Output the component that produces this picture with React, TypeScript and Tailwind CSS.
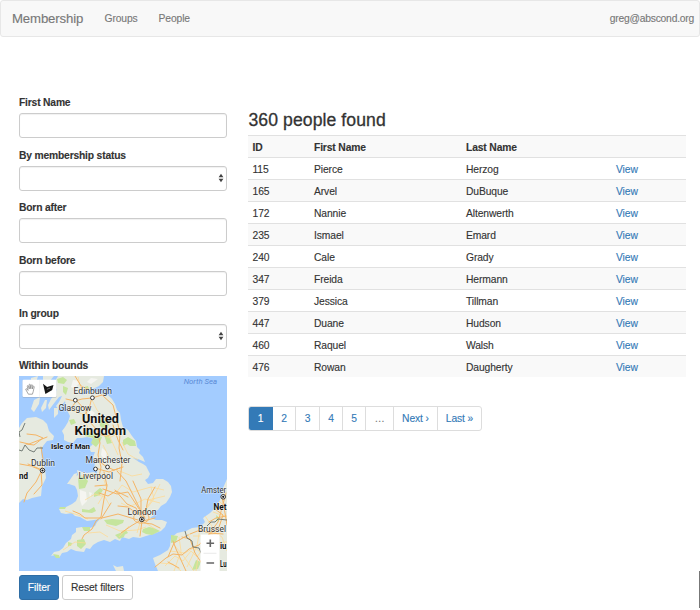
import React from 'react';

const people: [number, string, string][] = [
  [115, 'Pierce', 'Herzog'],
  [165, 'Arvel', 'DuBuque'],
  [172, 'Nannie', 'Altenwerth'],
  [235, 'Ismael', 'Emard'],
  [240, 'Cale', 'Grady'],
  [347, 'Freida', 'Hermann'],
  [379, 'Jessica', 'Tillman'],
  [447, 'Duane', 'Hudson'],
  [460, 'Raquel', 'Walsh'],
  [476, 'Rowan', 'Daugherty'],
];

function Field({ label, select = false }: { label: string; select?: boolean }) {
  return (
    <div className="h-[52.7px]">
      <div className="flex h-[16px] items-start font-bold leading-[12.6px] tracking-[-0.18px]">{label}</div>
      <div className="flex h-[25px] items-center justify-end rounded-[3px] border border-[#ccc] bg-white pr-[2px] shadow-[inset_0_1px_1px_rgba(0,0,0,0.06)]">
        {select && (
          <svg width="6" height="10" viewBox="0 0 6 10" fill="#444">
            <path d="M3 .8 5.4 4.2H.6zM3 9.2.6 5.8h4.8z" />
          </svg>
        )}
      </div>
    </div>
  );
}

function City({ x, y, capital = false }: { x: number; y: number; capital?: boolean }) {
  return (
    <g>
      <circle cx={x} cy={y} r={capital ? 2.3 : 1.9} fill="#fff" stroke="#222" strokeWidth="0.9" />
      {capital && <circle cx={x} cy={y} r="1.1" fill="#111" />}
    </g>
  );
}

function BoundsMap() {
  return (
    <svg className="block tracking-normal" width="208" height="195" viewBox="19 376 208 195">
      <rect x="19" y="376" width="208" height="195" fill="#a3ccff" />
      {/* land */}
      <g fill="#e6eae0">
        <path d="M58 376L104 376 103 382 99 386 95 388 90 390 84 392 81 395 88 393 94 391 98 392 103 394 108 395 112 399 115 404 117 410 120 413 121 420 123 427 128 430 132 436 136 441 137 447 140 450 139 453 143 457 145 462 138 459 133 458 139 462 143 464 146 466 148 470 150 474 148 478 145 480 148 484 153 483 156 479 163 479 168 482 171 486 172 492 170 497 166 503 161 506 158 510 153 512 154 515 150 518 156 520 162 520 167 522 165 527 161 531 153 534 146 536 140 538 133 537 129 539 122 537 120 541 115 539 110 542 104 540 98 542 93 545 90 549 86 548 84 552 76 551 71 549 67 552 62 553 59 558 55 555 51 556 54 552 59 551 63 548 66 543 71 539 72 535 76 532 76 528 82 527 90 528 95 526 97 522 100 519 94 520 87 521 80 517 75 516 72 513 66 514 61 513 59 509 66 507 72 504 76 501 78 496 77 490 75 486 69 484 73 481 75 477 78 475 77 470 82 472 87 473 94 472 97 474 97 471 94 469 95 463 93 457 95 452 91 452 89 448 93 444 95 439 91 438 87 437 82 438 77 438 73 443 68 442 64 440 64 435 62 431 65 427 68 422 70 416 68 412 66 406 65 401 62 405 59 410 56 406 59 402 62 396 59 397 55 402 52 406 49 410 48 405 51 399 55 394 57 389 53 391 50 395 46 395 50 389 54 383z" />
        <path d="M43 376l11 0-5 6-6 3zM31 378l7-2-2 7-5 3zM34 400l6-3-1 7-5 8-3-3zM45 400l2 0-1 8-4 4-1-4zM54 408l4 0 0 6-4 4zM67 484l7-10 3-1-1 8-7 3zM75 448l5-5-3 6z" />
        <path d="M19 428l3-5 5-5 9-1 7 3 4 4 2 7 5 5-1 4-6 1-4 5-2 6 1 8 3 9 1 9-4 8-1 10-9 2-5 2-4-1-4 4z" />
        <path d="M227 479l-4 9-3 12-4 7-6 6-7 5 2 4-5 5-8 1-6 3-9 2-6 5-1 8-2 4-8 5-7 3 2 6 3 7h75z" />
        <path d="M113 565l4 2 6-1 1 5h-8z" />
      </g>
      {/* bare uplands */}
      <g fill="#f5f5f1">
        <path d="M73 380l7 1-5 8-4-2zM91 378l7 1-7 5-4-2zM80 490l6 2 1 9-5 5-2-6zM91 410l4 3-3 4-4-4zM102 448l5 4-2 8-4-5zM89 492l3 1-2 5z" />
      </g>
      {/* woods and parks */}
      <g fill="#c5e59d">
        <path d="M57 379l6-2 4 3-3 4-6-1zM63 386l5 2-2 7-3-3zM84 387l4-1 1 3-4 1zM69 420l5-1 2 4-5 2zM85 432l8 1 9 4-2 5-4 5-5-4 2-5-8-2zM99 420l6-1 4 6-5 4-4-3zM104 435l5 1 3 7-5 1zM123 440l5-3 7 4 1 5-6 0-3-2-4 2zM78 478l6-2 4 5-3 7-6 1zM94 493l6-5 3 2-3 5-6 2zM82 509l7 1 5-3 2 4-4 2-10-1zM82 527l8 0 0 4-6 0zM77 540l7-1 2 5-5 5-4-3zM68 542l4 1-1 3-3 0zM53 554l6 1 1 3-4 0zM104 520l8-1 12 1-1 3-7 3-9-2zM60 507l6 0-1 2-6 0zM115 535l5-2 5 1-1 3-5 2zM143 529l6-2 5 1 6 3-8 4-6-1-4-2zM121 532l5-2 2 3-4 2zM171 535l7 1-2 6-5 1zM196 560l5 2-3 7-6 1zM216 515l4 3-3 4zM211 558l7 2-3 5-5-2z" />
      </g>
      {/* minor roads */}
      <g fill="none" stroke="#ffd991" strokeWidth="0.75">
        <path d="M78 377l3 12M92 400l5 10 9 10 4 17 8 18M70 410l13 4 5 14M98 431l11 7 8-4M80 476l8 0 7-2M85 500l10-6 10 3 5 9M122 442l6 12 10 6M117 470l15 6 10-2M109 457l-6-12M65 511l13 4 10 4M63 550l12-8 11 1M106 525l14 6 17-1 9-3M121 503l8 4 16-8 15 4M151 487l3 12-10 13M160 484l-8 16-9 12M116 493l6-8 11 7 18-5 13 3M98 504l9-15-3-9M148 500l17-4M137 533l4-13 14 9M129 526l-10 11M83 446l8 3M88 533l12-1 8 5" />
        <path d="M165 566l10-10 8 5 8-10 6 6 7-10 8-4 15-1M174 545l8 9 12 17M179 537l2 14-7 20M188 534l5 12 14 12 8 13M200 528l-3 18-10 21M205 516l7 10-2 14 8 16M213 512l14 5M219 501l8 8M208 528l14 9 5 14M193 536l17 0 11-7M160 563l13 1 8 7M198 558l-2 13M170 551l15 2 10-6" />
      </g>
      {/* motorways */}
      <g fill="none" stroke="#f5b566" strokeWidth="1" strokeLinecap="round">
        <path d="M75 376l6 10 7 3M66 399l9 2 7-2 10-1 10-3M102 395l11 10 4 15 3 14-1 14 3 15-2 18M76 400l10 11 3 10 8 9 3 13-2 12 3 12-2 10M75 403l-6 8M92 397l-3 12-5 6M97 434l9 2 10-3M97 460l10 7 7 3 9-3M95 468l14 4 11-4M113 425l5 15 5 10M104 472l3 14-3 13-3 18-5 4-4 8-8 6-2 4" />
        <path d="M73 511l7 3 5 4 17 0 16-4 20 6M103 489l14 5 11-2 17 26M99 493l9 3 8-5 12 6M115 490l12 14 9 4 6 11M111 503l-10 16M117 471l9 10 9 18 9 18M133 481l8 18 0 18M155 487l-7 12-3 16M141 520l-10 6-10 7M142 521l-2 15M143 521l12-3M144 523l8 1 8 4M134 516c2-5 14-5 15 1s-11 9-15 3zM107 485l-12 1M118 506l10 1 8 6" />
        <path d="M20 442l9 2 13-5 5-2M20 464l11 2 12 5M41 447l2 12-1 9M42 470l-14-6M41 472l-5 10-9 11-3 9M41 471l1 14-8 9M27 434l9 1 7 3-9 7-8-1" />
        <path d="M155 567l11-9 7-4 9 1 7-6 10-4 10-11 9-12 4-14 4-15M173 541l3 8 10 22M182 537l8 2 5 14 10 15M190 534l10-4 9 3 14 1M168 562l11 6M209 522l7-4 10-2M215 509l8 6-4 12-10 8M222 496l3 17 2 12M203 537l9 12 4 18M168 557l6-14 14-8" />
      </g>
      <path d="M19 450l3 1 3-6 4 5 5 2 3-4 6 0M20 437l-1-5 3-2 3-7M185 531l2 7 5 3 1 6 6 1 3 7 5 0M207 526l4-4 4 0 3-3 9 1" fill="none" stroke="#68706b" strokeWidth="0.9" />
      <City x={75.3} y={400.2} />
      <City x={92.4} y={397.8} />
      <City x={107.5} y={467} />
      <City x={95.5} y={469} />
      <City x={42.5} y={470.5} capital />
      <City x={141.8} y={519.4} capital />
      <City x={223.2} y={496.8} capital />
      <g fontFamily="Roboto, 'Liberation Sans', sans-serif" fill="#303030" stroke="#fff" strokeWidth="1.2" strokeOpacity="0.5" paintOrder="stroke" fontSize="8.9">
        <text x="73.5" y="393.8" textLength="38.5" lengthAdjust="spacingAndGlyphs">Edinburgh</text>
        <text x="58.5" y="410.5" textLength="33" lengthAdjust="spacingAndGlyphs">Glasgow</text>
        <text x="85.5" y="463" textLength="45" lengthAdjust="spacingAndGlyphs">Manchester</text>
        <text x="78.5" y="479" textLength="34.5" lengthAdjust="spacingAndGlyphs">Liverpool</text>
        <text x="31" y="466.3" textLength="24" lengthAdjust="spacingAndGlyphs">Dublin</text>
        <text x="127.5" y="515" textLength="29" lengthAdjust="spacingAndGlyphs">London</text>
        <text x="201.2" y="492.5" textLength="25" lengthAdjust="spacingAndGlyphs">Amster</text>
        <text x="198" y="531.7" textLength="28" lengthAdjust="spacingAndGlyphs">Brussel</text>
        <g fontWeight="700" fill="#111">
          <text x="51" y="449.3" fontSize="7.6" textLength="39" lengthAdjust="spacingAndGlyphs">Isle of Man</text>
          <text x="213.5" y="509.5" fontSize="8.5" textLength="13" lengthAdjust="spacingAndGlyphs">Net</text>
          <text x="19" y="478.5" fontSize="8.5" textLength="9" lengthAdjust="spacingAndGlyphs">nd</text>
          <text x="220" y="548.5" fontSize="8.5" textLength="6.5" lengthAdjust="spacingAndGlyphs">iu</text>
          <text x="220" y="566.5" fontSize="8.5" textLength="6.5" lengthAdjust="spacingAndGlyphs">Lu</text>
          <text x="82" y="423" fontSize="12.4" textLength="37" lengthAdjust="spacingAndGlyphs">United</text>
          <text x="74.5" y="435.3" fontSize="12.4" textLength="51.5" lengthAdjust="spacingAndGlyphs">Kingdom</text>
        </g>
      </g>
      <text x="183.7" y="384" fontFamily="Roboto, 'Liberation Sans', sans-serif" fontSize="7.4" fontStyle="italic" fill="#5b8bd6" textLength="33.5" lengthAdjust="spacingAndGlyphs">North Sea</text>
      {/* drawing tools */}
      <rect x="22.5" y="380.2" width="34" height="17.6" rx="1.2" fill="#8793a3" fillOpacity="0.45" />
      <rect x="22.5" y="379.7" width="34" height="17.3" rx="1.2" fill="#fff" />
      <path d="M39.5 380v17" stroke="#f0f0f0" strokeWidth="0.7" />
      <path d="M28.4 394.2l-2.6-4.6c-.3-.8.7-1.2 1.3-.4l1 1.2-.8-4c-.1-1 .9-1.1 1.2-.2l.8 2.7-.2-4c0-.9 1.2-.9 1.3 0l.3 3.8.6-3.5c.2-.8 1.2-.6 1.1.2l-.2 3.6.9-2.4c.4-.7 1.3-.4 1.1.4l-1 4.7-.8 2.5z" fill="#fff" stroke="#777" strokeWidth="0.65" />
      <path d="M43 383.8l4.1 3.2 6.4-2-1.3 4.9-6.8 4.2z" fill="#161616" />
      <path d="M46.9 389.3l3.2-1.2" stroke="#777" strokeWidth="0.8" />
      {/* zoom control */}
      <path d="M200.5 534.5h19V571h-19z" fill="#fff" />
      <path d="M203.5 553.3h13" stroke="#e4e4e4" strokeWidth="0.8" />
      <path d="M206.5 543.2h7.6M210.3 539.4v7.6M206.5 563h7.6" stroke="#666" strokeWidth="1.6" />
    </svg>
  );
}

function Pagination() {
  return (
    <div className="flex h-[25px] w-[234px] overflow-hidden rounded-[3px] border border-[#ddd] text-[#337ab7]">
      <div className="-mt-px -ml-px flex h-[25px] w-[25px] items-center justify-center bg-[#337ab7] text-white">1</div>
      <div className="flex w-[23px] items-center justify-center border-r border-[#ddd]">2</div>
      <div className="flex w-[24px] items-center justify-center border-r border-[#ddd]">3</div>
      <div className="flex w-[23px] items-center justify-center border-r border-[#ddd]">4</div>
      <div className="flex w-[23px] items-center justify-center border-r border-[#ddd]">5</div>
      <div className="flex w-[28px] items-center justify-center border-r border-[#ddd] text-[#777]">…</div>
      <div className="flex w-[44px] items-center justify-center border-r border-[#ddd]">Next ›</div>
      <div className="flex flex-1 items-center justify-center">Last »</div>
    </div>
  );
}

export default function App() {
  return (
    <div className="relative h-[610px] w-[700px] overflow-hidden bg-white font-['Liberation_Sans',Arial,sans-serif] text-[10.3px] tracking-[-0.1px] text-[#333] [-webkit-text-stroke:0.12px_currentColor]">
      <nav className="flex h-[37px] items-center rounded-[3px] border border-[#e7e7e7] bg-[#f8f8f8] pl-[11px] pr-[5px] pt-px text-[#777]">
        <span className="w-[92.5px] text-[13.2px] tracking-[-0.13px]">Membership</span>
        <span className="w-[54px]">Groups</span>
        <span>People</span>
        <span className="ml-auto tracking-[-0.22px]">greg@abscond.org</span>
      </nav>
      <div className="flex items-start">
        <aside className="ml-[19px] mt-[60px] w-[208px]">
          <Field label="First Name" />
          <Field label="By membership status" select />
          <Field label="Born after" />
          <Field label="Born before" />
          <Field label="In group" select />
          <div className="h-[15.5px] font-bold leading-[12.6px] tracking-[-0.18px]">Within bounds</div>
          <div className="[-webkit-text-stroke:0]">
            <BoundsMap />
          </div>
          <div className="mt-[4px] flex gap-[3px]">
            <button className="h-[25px] w-[40px] rounded-[3px] border border-[#2e6da4] bg-[#337ab7] text-white">Filter</button>
            <button className="h-[25px] w-[71px] rounded-[3px] border border-[#ccc] bg-white">Reset filters</button>
          </div>
        </aside>
        <main className="ml-[21px] mt-[71px] w-[438px]">
          <h1 className="h-[27px] pl-[0.5px] pt-px text-[17.6px] font-medium leading-[23px] tracking-[0.08px] [-webkit-text-stroke:0.3px_currentColor]">360 people found</h1>
          <div className="flex h-[22px] items-center border-t border-[#e1e1e1] bg-[#f9f9f9] pl-[4.5px] pt-[2px] font-bold tracking-[-0.14px]">
            <span className="w-[61.5px]">ID</span>
            <span className="w-[152px]">First Name</span>
            <span>Last Name</span>
          </div>
          {people.map(([id, first, last]) => (
            <div key={id} className="flex h-[22px] items-center border-t border-[#e1e1e1] pl-[4.5px] pt-[2px] odd:bg-white even:bg-[#f9f9f9]">
              <span className="w-[61.5px]">{id}</span>
              <span className="w-[152px]">{first}</span>
              <span className="w-[150px]">{last}</span>
              <span className="text-[#337ab7]">View</span>
            </div>
          ))}
          <div className="mt-[29px]">
            <Pagination />
          </div>
        </main>
      </div>
      <div className="absolute right-0 top-[571px] h-[37px] w-px bg-[#777]" />
    </div>
  );
}
